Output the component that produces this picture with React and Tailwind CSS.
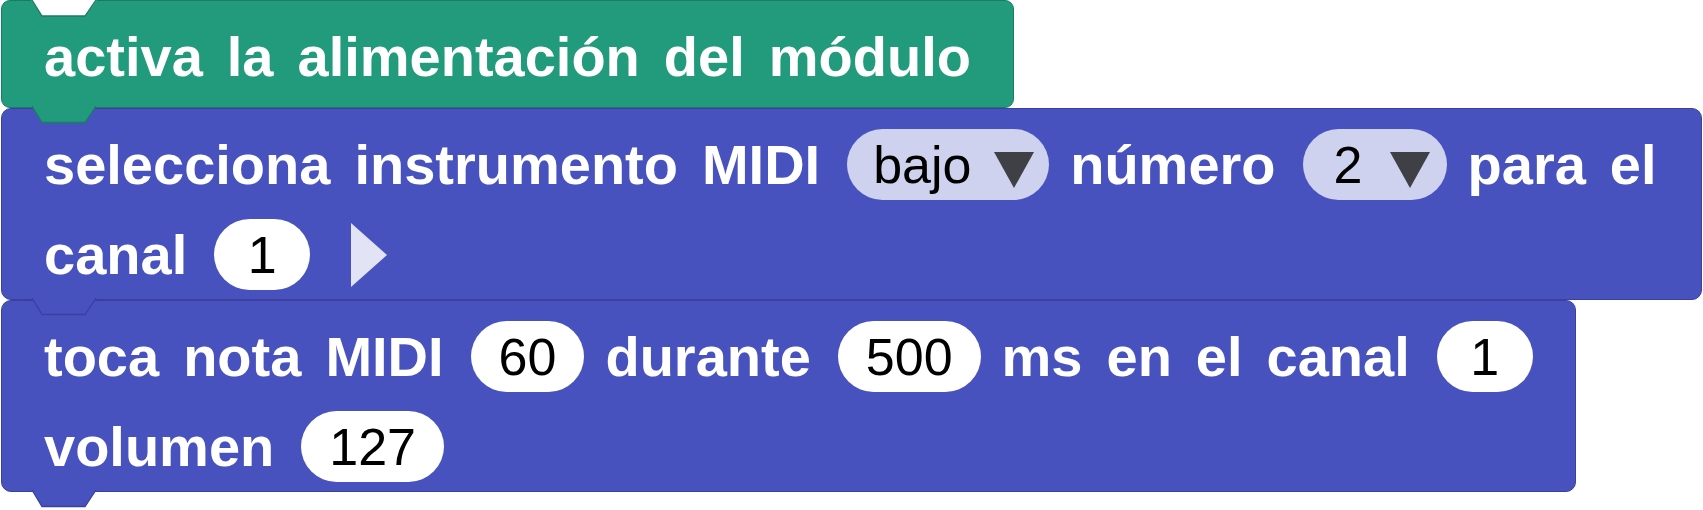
import React from "react";

function Tab({ fill, stroke }) {
  return (
    <svg
      className="absolute left-[30px] top-full -mt-[1px] z-10 overflow-visible"
      width="66"
      height="18"
      viewBox="0 0 66 18"
    >
      <path d="M0,0 L10,16.5 L53,16.5 L64,0 Z" fill={fill} stroke="none" />
      <path d="M0,0 L10,16.5 L53,16.5 L64,0" fill="none" stroke={stroke} strokeWidth="1.3" />
    </svg>
  );
}

function TopNotch({ stroke }) {
  return (
    <svg
      className="absolute left-[30px] -top-[1px] z-10 overflow-visible"
      width="66"
      height="18"
      viewBox="0 0 66 18"
    >
      <path d="M-0.5,0 L10,16 L53,16 L64.5,0 Z" fill="#ffffff" stroke="none" />
      <path d="M0,0 L10,16 L53,16 L64,0" fill="none" stroke={stroke} strokeWidth="1.3" />
    </svg>
  );
}

function Label({ children }) {
  return (
    <span className="text-[56px] font-bold text-white leading-[71px] whitespace-nowrap">
      {children}
    </span>
  );
}

function Num({ children }) {
  return (
    <span className="ml-[3px] -mr-[3px] h-[71px] min-w-[96px] px-[28px] rounded-full bg-white flex items-center justify-center text-[52px] leading-none text-black whitespace-nowrap">
      {children}
    </span>
  );
}

function DownTri() {
  return (
    <svg className="mt-[11px] shrink-0" width="40" height="36" viewBox="0 0 40 36">
      <path d="M0,0 L40,0 L20,36 Z" fill="#3f3f46" />
    </svg>
  );
}

export default function App() {
  return (
    <div className="pl-[1px] pb-[20px] [font-family:'Liberation_Sans',Arial,sans-serif] bg-white">
      {/* Green block */}
      <div className="relative w-[1013px] h-[108px] rounded-[9px] border border-[#1a7c63] bg-[#219b7c] pl-[42px] pt-[20px]">
        <TopNotch stroke="#1a7c63" />
        <div className="flex items-center gap-[24px] h-[71px]">
          <Label>activa</Label>
          <Label>la</Label>
          <Label>alimentación</Label>
          <Label>del</Label>
          <Label>módulo</Label>
        </div>
        <Tab fill="#219b7c" stroke="#1a7c63" />
      </div>

      {/* Blue block 1 */}
      <div className="relative w-[1701px] h-[192px] rounded-[10px] border border-[#3a419c] bg-[#4852bf] pl-[42px] pt-[20px] flex flex-col gap-[19px]">
        <div className="flex items-center gap-[24px] h-[71px]">
          <Label>selecciona</Label>
          <Label>instrumento</Label>
          <Label>MIDI</Label>
          <span className="ml-[3px] -mr-[3px] h-[71px] w-[202px] pl-[26px] pr-[16px] rounded-full bg-[#cfd2ee] flex items-center gap-[22px] text-[52px] leading-none text-black">
            <span>bajo</span>
            <DownTri />
          </span>
          <Label>número</Label>
          <span className="ml-[3px] -mr-[3px] h-[71px] w-[144px] pl-[31px] pr-[15px] rounded-full bg-[#cfd2ee] flex items-center gap-[28px] text-[52px] leading-none text-black">
            <span>2</span>
            <DownTri />
          </span>
          <Label>para</Label>
          <Label>el</Label>
        </div>
        <div className="flex items-center gap-[24px] h-[71px]">
          <Label>canal</Label>
          <Num>1</Num>
          <svg className="ml-[20px]" width="36" height="64" viewBox="0 0 36 64">
            <path d="M0,0 L36,32 L0,64 Z" fill="#e2e3f5" />
          </svg>
        </div>
        <Tab fill="#4852bf" stroke="#3a419c" />
      </div>

      {/* Blue block 2 */}
      <div className="relative w-[1575px] h-[192px] rounded-[10px] border border-[#3a419c] bg-[#4852bf] pl-[42px] pt-[20px] flex flex-col gap-[19px]">
        <div className="flex items-center gap-[24px] h-[71px]">
          <Label>toca</Label>
          <Label>nota</Label>
          <Label>MIDI</Label>
          <Num>60</Num>
          <Label>durante</Label>
          <Num>500</Num>
          <Label>ms</Label>
          <Label>en</Label>
          <Label>el</Label>
          <Label>canal</Label>
          <Num>1</Num>
        </div>
        <div className="flex items-center gap-[24px] h-[71px]">
          <Label>volumen</Label>
          <Num>127</Num>
        </div>
        <Tab fill="#4852bf" stroke="#3a419c" />
      </div>
    </div>
  );
}
